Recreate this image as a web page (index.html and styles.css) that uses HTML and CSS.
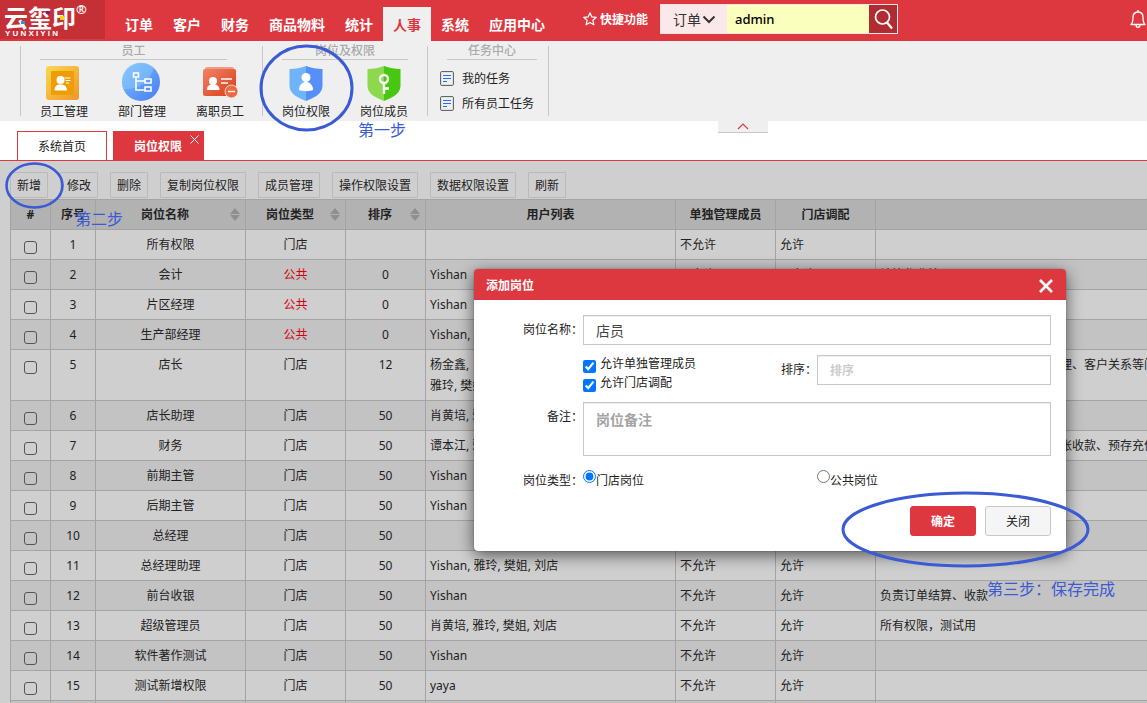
FILE: index.html
```html
<!DOCTYPE html>
<html lang="zh-CN">
<head>
<meta charset="utf-8">
<title>岗位权限</title>
<link rel="stylesheet" href="styles.css">
</head>
<body>
<header class="topbar">
  <a class="logo" href="#" aria-label="云玺印">
    <svg width="105" height="39" viewBox="0 0 105 39">
      <text class="logo-name" x="4" y="27">云玺印</text>
      <text class="logo-latin" x="5" y="36">Y U N X I Y I N</text>
      <rect x="21" y="21" width="4" height="3" fill="#1b9be0"/>
      <rect x="46" y="11" width="4" height="3" fill="#7a1f8c"/>
      <rect x="60" y="16" width="4" height="4" fill="#ffd400"/>
      <text class="logo-mark" x="76" y="14">®</text>
    </svg>
  </a>
  <nav class="nav">
    <a href="#">订单</a><a href="#">客户</a><a href="#">财务</a><a href="#">商品物料</a><a href="#">统计</a><a href="#" class="active">人事</a><a href="#">系统</a><a href="#">应用中心</a>
  </nav>
  <a class="quick" href="#">
    <svg width="14" height="14" viewBox="0 0 14 14" fill="none" stroke="#fff" stroke-width="1.2" stroke-linejoin="round"><path d="M7 .8l1.8 4.1 4.5.4-3.4 3 1 4.5L7 10.5l-3.9 2.3 1-4.500-3.400-3 4.500-.4z"/></svg>
    快捷功能
  </a>
  <form class="search">
    <div class="search-kind">
      <select aria-label="搜索类型"><option>订单</option></select>
      <svg width="14" height="9" viewBox="0 0 14 9" fill="none" stroke="#333" stroke-width="2"><path d="M1.500 1.500L7 7l5.500-5.500"/></svg>
    </div>
    <input type="text" value="admin" aria-label="搜索">
    <button type="button" aria-label="搜索">
      <svg width="22" height="24" viewBox="0 0 22 24" fill="none" stroke="#fff" stroke-width="1.700"><circle cx="9.500" cy="10" r="7"/><path d="M14 15.500l5 6" stroke-width="2.200"/></svg>
    </button>
  </form>
  <button class="bell" type="button" aria-label="通知">
    <svg width="18" height="20" viewBox="0 0 18 20" fill="none" stroke="#fff" stroke-width="1.300" stroke-linejoin="round"><path d="M9 1v2M2 15.500c1.500-1.500 2-3 2-7C4 5 6 3 9 3s5 2 5 5.500c0 4 .5 5.500 2 7zM7 16c0 3 4 3 4 0"/></svg>
  </button>
</header>

<section class="ribbon">
  <div class="group staff">
    <h2>员工</h2>
    <div class="tools">
      <a href="#"><svg width="36" height="40" viewBox="0 0 36 40"><defs><linearGradient id="gold" x1="0" y1="0" x2="1" y2="1"><stop offset="0" stop-color="#f8d850"/><stop offset="1" stop-color="#f0962c"/></linearGradient></defs><rect x="0" y="4" width="33" height="34" rx="3" fill="url(#gold)"/><rect x="5" y="9" width="23" height="24" rx="1" fill="#ee9d05"/><circle cx="14.500" cy="18" r="4" fill="#fff"/><path d="M8.500 28.500c0-4 2-5.500 4.500-6h3c2.500.5 5 2 5 6z" fill="#fff"/><path d="M18.500 16h6M19.500 18.500h5M20 21h3" stroke="#fff" stroke-width="1"/></svg>员工管理</a>
      <a href="#"><svg width="40" height="40" viewBox="0 0 40 40"><defs><linearGradient id="sky" x1="0" y1="0" x2="1" y2="1"><stop offset="0" stop-color="#7ec4fb"/><stop offset="1" stop-color="#477bf5"/></linearGradient></defs><circle cx="19" cy="20" r="19" fill="url(#sky)"/><path d="M.5 25A19 19 0 0 1 32 6C27 20 17 28 1.500 27z" fill="#8cc9fb" opacity=".5"/><path d="M11.500 11h5v4h-5zM23 17h6v4h-6zM23 25h6v4h-6zM14 15v13h9M14 19h9" fill="none" stroke="#fff" stroke-width="1.600"/></svg>部门管理</a>
      <a href="#"><svg width="40" height="40" viewBox="0 0 40 40"><defs><linearGradient id="red" x1="0" y1="0" x2="1" y2="1"><stop offset="0" stop-color="#f18365"/><stop offset="1" stop-color="#da3c16"/></linearGradient></defs><rect x="5" y="5" width="29" height="7" rx="2" fill="#f09c82"/><rect x="3" y="7" width="33" height="27" rx="2" fill="url(#red)"/><circle cx="13" cy="19" r="4" fill="#fff"/><path d="M7 28c0-4 2-5 4.500-6h3c2.500 1 5 2 5 6z" fill="#fff"/><path d="M21 17h11M21 21h7" stroke="#fff" stroke-width="1.400"/><circle cx="31.500" cy="29.500" r="6.500" fill="#ea6a45" stroke="#efefef" stroke-width=".8"/><path d="M28 29.500h7" stroke="#fff" stroke-width="1.400"/></svg>离职员工</a>
    </div>
  </div>
  <div class="group">
    <h2>岗位及权限</h2>
    <div class="tools">
      <a href="#"><svg width="34" height="40" viewBox="0 0 34 40"><path d="M17 4C12 6 6 7 .5 7v17c0 8 9 12 16.500 15z" fill="#6fb3fb"/><path d="M17 4c5 2 11 3 16.500 3v17c0 8-9 12-16.500 15z" fill="#568ffa"/><circle cx="17" cy="15.500" r="4.500" fill="#fff"/><path d="M10 28c0-5 3-7.500 7-8.500 4 1 7 3.500 7 8.500-3 1.500-11 1.500-14 0z" fill="#fff"/></svg>岗位权限</a>
      <a href="#"><svg width="34" height="40" viewBox="0 0 34 40"><path d="M17 4C12 6 6 7 .5 7v17c0 8 9 12 16.500 15z" fill="#8cd94d"/><path d="M17 4c5 2 11 3 16.500 3v17c0 8-9 12-16.500 15z" fill="#48c711"/><circle cx="17" cy="17" r="4" fill="none" stroke="#fff" stroke-width="2.400"/><path d="M17 21v11M17 26.500h5" stroke="#fff" stroke-width="2.400"/></svg>岗位成员</a>
    </div>
  </div>
  <div class="group jobs">
    <h2>任务中心</h2>
    <div class="tasks">
      <a href="#"><svg width="14" height="15" viewBox="0 0 14 15" fill="none"><rect x=".6" y=".6" width="12.800" height="13.800" rx="1" stroke="#555"/><path d="M3 4.500h8M3 7.500h8M3 10.500h4" stroke="#1e6fff"/></svg>我的任务</a>
      <a href="#"><svg width="14" height="15" viewBox="0 0 14 15" fill="none"><rect x=".6" y=".6" width="12.800" height="13.800" rx="1" stroke="#555"/><path d="M3 4.500h8M3 7.500h8M3 10.500h4" stroke="#1e6fff"/></svg>所有员工任务</a>
    </div>
  </div>
  <button class="collapse" type="button" aria-label="收起"><svg width="12" height="7" viewBox="0 0 12 7" fill="none" stroke="#dd383f" stroke-width="1.100"><path d="M1 6l5-5 5 5"/></svg></button>
</section>

<div class="tabs">
  <a href="#" class="tab">系统首页</a>
  <a href="#" class="tab current">岗位权限
    <svg class="tab-close" width="9" height="9" viewBox="0 0 9 9" stroke="#fff"><path d="M.5.5l8 8M8.500.5l-8 8"/></svg>
  </a>
</div>

<main class="content">
  <div class="toolbar">
    <button type="button">新增</button><button type="button">修改</button><button type="button">删除</button><button type="button">复制岗位权限</button><button type="button">成员管理</button><button type="button">操作权限设置</button><button type="button">数据权限设置</button><button type="button">刷新</button>
  </div>
  <div class="table-view">
  <table>
    <colgroup><col class="w-check"><col class="w-no"><col class="w-name"><col class="w-kind"><col class="w-sort"><col class="w-users"><col class="w-flag"><col class="w-flag"><col></colgroup>
    <thead>
      <tr><th>#</th><th>序号</th><th class="sortable">岗位名称<i class="sorter"></i></th><th class="sortable">岗位类型<i class="sorter"></i></th><th class="sortable">排序<i class="sorter"></i></th><th>用户列表</th><th>单独管理成员</th><th>门店调配</th><th></th></tr>
    </thead>
    <tbody>
      <tr><td><input type="checkbox" aria-label="选择 1"></td><td>1</td><td>所有权限</td><td>门店</td><td></td><td></td><td>不允许</td><td>允许</td><td></td></tr>
      <tr><td><input type="checkbox" aria-label="选择 2"></td><td>2</td><td>会计</td><td class="public">公共</td><td>0</td><td>Yishan</td><td>不允许</td><td>不允许</td><td>计算作业情况</td></tr>
      <tr><td><input type="checkbox" aria-label="选择 3"></td><td>3</td><td>片区经理</td><td class="public">公共</td><td>0</td><td>Yishan</td><td>不允许</td><td>允许</td><td></td></tr>
      <tr><td><input type="checkbox" aria-label="选择 4"></td><td>4</td><td>生产部经理</td><td class="public">公共</td><td>0</td><td>Yishan, 雅玲</td><td>不允许</td><td>允许</td><td></td></tr>
      <tr><td><input type="checkbox" aria-label="选择 5"></td><td>5</td><td>店长</td><td>门店</td><td>12</td><td>杨金鑫, 肖黄培, 刘店<br>雅玲, 樊姐</td><td>不允许</td><td>允许</td><td>门店全面管理、订单管理、员工管理、客户关系等门店事务</td></tr>
      <tr><td><input type="checkbox" aria-label="选择 6"></td><td>6</td><td>店长助理</td><td>门店</td><td>50</td><td>肖黄培, 雅玲</td><td>不允许</td><td>允许</td><td></td></tr>
      <tr><td><input type="checkbox" aria-label="选择 7"></td><td>7</td><td>财务</td><td>门店</td><td>50</td><td>谭本江, 雅玲</td><td>不允许</td><td>允许</td><td>门店财务管理、订单结算、负责挂账收款、预存充值</td></tr>
      <tr><td><input type="checkbox" aria-label="选择 8"></td><td>8</td><td>前期主管</td><td>门店</td><td>50</td><td>Yishan</td><td>不允许</td><td>允许</td><td></td></tr>
      <tr><td><input type="checkbox" aria-label="选择 9"></td><td>9</td><td>后期主管</td><td>门店</td><td>50</td><td>Yishan</td><td>不允许</td><td>允许</td><td></td></tr>
      <tr><td><input type="checkbox" aria-label="选择 10"></td><td>10</td><td>总经理</td><td>门店</td><td>50</td><td></td><td>不允许</td><td>允许</td><td></td></tr>
      <tr><td><input type="checkbox" aria-label="选择 11"></td><td>11</td><td>总经理助理</td><td>门店</td><td>50</td><td>Yishan, 雅玲, 樊姐, 刘店</td><td>不允许</td><td>允许</td><td></td></tr>
      <tr><td><input type="checkbox" aria-label="选择 12"></td><td>12</td><td>前台收银</td><td>门店</td><td>50</td><td>Yishan</td><td>不允许</td><td>允许</td><td>负责订单结算、收款</td></tr>
      <tr><td><input type="checkbox" aria-label="选择 13"></td><td>13</td><td>超级管理员</td><td>门店</td><td>50</td><td>肖黄培, 雅玲, 樊姐, 刘店</td><td>不允许</td><td>允许</td><td>所有权限，测试用</td></tr>
      <tr><td><input type="checkbox" aria-label="选择 14"></td><td>14</td><td>软件著作测试</td><td>门店</td><td>50</td><td>Yishan</td><td>不允许</td><td>允许</td><td></td></tr>
      <tr><td><input type="checkbox" aria-label="选择 15"></td><td>15</td><td>测试新增权限</td><td>门店</td><td>50</td><td>yaya</td><td>不允许</td><td>允许</td><td></td></tr>
      <tr><td></td><td></td><td></td><td></td><td></td><td></td><td></td><td></td><td></td></tr>
    </tbody>
  </table>
  </div>
</main>

<div class="dialog" role="dialog" aria-labelledby="dialog-title">
  <div class="dialog-head">
    <h1 id="dialog-title">添加岗位</h1>
    <button type="button" aria-label="关闭窗口"><svg width="14" height="14" viewBox="0 0 14 14" stroke="#fff" stroke-width="2.600"><path d="M1 1l12 12M13 1L1 13"/></svg></button>
  </div>
  <form class="dialog-body">
    <div class="row">
      <label class="caption" for="post-name">岗位名称：</label>
      <input class="field" id="post-name" type="text" value="店员">
    </div>
    <div class="row">
      <span class="caption"></span>
      <div class="checks">
        <label><input type="checkbox" checked>允许单独管理成员</label>
        <label><input type="checkbox" checked>允许门店调配</label>
      </div>
      <div class="sort">
        <label class="caption" for="post-sort">排序：</label>
        <input class="field small" id="post-sort" type="text" placeholder="排序">
      </div>
    </div>
    <div class="row">
      <label class="caption" for="post-note">备注：</label>
      <textarea class="field" id="post-note" placeholder="岗位备注"></textarea>
    </div>
    <div class="row">
      <span class="caption">岗位类型：</span>
      <div class="radio"><label><input type="radio" name="kind" checked>门店岗位</label></div>
      <div class="radio"><label><input type="radio" name="kind">公共岗位</label></div>
    </div>
    <div class="actions">
      <button type="button" class="primary">确定</button>
      <button type="button">关闭</button>
    </div>
  </form>
</div>

<svg class="notes" width="1147" height="703" viewBox="0 0 1147 703">
  <g fill="none" stroke="#3a5bd4" stroke-width="3">
    <ellipse cx="306.500" cy="88" rx="45.500" ry="42"/>
    <ellipse cx="34.500" cy="185.500" rx="28" ry="22" stroke-width="2.600"/>
    <ellipse cx="965.500" cy="529.500" rx="122.500" ry="36.500"/>
  </g>
  <text x="358" y="136">第一步</text>
  <text x="75" y="225">第二步</text>
  <text x="987" y="595">第三步：保存完成</text>
</svg>
</body>
</html>
```

FILE: styles.css
```css
* { box-sizing: border-box; }
html { height: 100%; }
body {
  margin: 0;
  height: 100%;
  position: relative;
  overflow: hidden;
  display: flex;
  flex-direction: column;
  background: #fff;
  color: #222;
  font: 12px/21px "Noto Sans", "Noto Sans CJK SC", sans-serif;
}
a { color: inherit; text-decoration: none; }
button, input, select, textarea { font: inherit; color: inherit; margin: 0; }
button { cursor: pointer; padding: 0; }
svg { display: block; flex: none; }
h1, h2 { margin: 0; font-size: 12px; }

.topbar { flex: none; height: 41px; display: flex; align-items: flex-start; background: #dd383f; color: #fff; }
.logo { width: 105px; height: 39px; margin-right: 10px; background: #c52f36; }
.logo text { fill: #fff; font-family: "Noto Sans CJK SC", sans-serif; font-weight: 700; }
.logo .logo-name { font-size: 24px; }
.logo .logo-latin { font-family: "Liberation Sans", sans-serif; font-size: 8px; }
.logo .logo-mark { font-family: "Noto Sans", sans-serif; font-size: 13px; }
.nav { display: flex; padding-top: 7px; font-size: 14px; font-weight: 700; }
.nav a { height: 34px; line-height: 36px; padding: 0 10px; }
.nav .active { background: #efefef; color: #dd383f; }
.quick { display: flex; align-items: center; gap: 3px; height: 38px; margin-left: 28px; font-weight: 700; }
.search { display: flex; height: 30px; margin: 4px 0 0 12px; border: 1px solid #f3e3e3; }
.search-kind { width: 66px; display: flex; align-items: center; padding-left: 12px; background: #fbe9e9; color: #333; }
.search-kind select { width: 29px; height: 28px; padding: 0; border: 0; background: none; appearance: none; font-size: 14px; }
.search input { width: 142px; padding: 0 8px; border: 0; background: #faffbd; color: #000; font-size: 13px; font-weight: 500; }
.search button { width: 28px; border: 0; padding-left: 4px; background: #b02c33; }
.bell { margin: 9px 0 0 auto; border: 0; background: none; }

.ribbon { flex: none; position: relative; height: 80px; display: flex; padding: 5px 0 5px 20px; background: #efefef; }
.group { padding: 0 19px; border-left: 1px solid #c8c8c8; }
.group h2 { height: 14px; line-height: 10px; border-bottom: 1px solid #c8c8c8; text-align: center; color: #aaa; font-weight: 500; }
.staff { padding-right: 18px; }
.staff h2 { margin-right: 17px; }
.jobs { padding-right: 11px; border-right: 1px solid #c8c8c8; }
.jobs h2 { width: 90px; }
.tools { display: flex; gap: 30px; }
.tools a { width: 48px; display: flex; flex-direction: column; align-items: center; line-height: 20px; white-space: nowrap; }
.tools a svg { margin-top: 2px; }
.tasks { display: flex; flex-direction: column; gap: 4px; padding-top: 8px; }
.tasks a { display: flex; align-items: center; gap: 8px; margin-left: -7px; white-space: nowrap; }
.collapse { position: absolute; top: 80px; right: 379px; width: 50px; height: 12px; display: flex; justify-content: center; align-items: center; border: 0; border-bottom: 1px solid #c8c8c8; background: #efefef; }

.tabs { flex: none; height: 40px; display: flex; align-items: flex-end; gap: 6px; padding-left: 17px; border-bottom: 1px solid #dd383f; }
.tab { position: relative; height: 29px; line-height: 29px; padding: 0 20px; border: 1px solid #dd383f; border-bottom: 0; }
.tab.current { background: #dd383f; color: #fff; font-weight: 700; padding-right: 21px; }
.tab-close { position: absolute; top: 3px; right: 4px; }

.content { flex: 1; min-height: 0; overflow: hidden; padding: 11px 0 0 10px; background: #cfcfcf; }
.toolbar { display: flex; gap: 12px; margin-bottom: 1px; }
.toolbar button { height: 26px; padding: 0 6px; border: 1px solid #bababa; border-radius: 1px; background: none; }
.table-view { overflow: hidden; }
table { width: 1465px; table-layout: fixed; border-collapse: collapse; }
.w-check { width: 40px; }
.w-no { width: 45px; }
.w-name { width: 150px; }
.w-kind { width: 100px; }
.w-sort { width: 80px; }
.w-users { width: 250px; }
.w-flag { width: 100px; }
th, td { height: 30px; padding: 4px; border: 1px solid #a4a4a4; vertical-align: top; line-height: 21px; }
th { background: #b2b2b2; }
.sortable { position: relative; padding-right: 15px; }
.sorter { position: absolute; right: 5px; top: 8px; width: 10px; height: 13px; display: flex; flex-direction: column; justify-content: space-between; }
.sorter::before, .sorter::after { content: ""; border: 5px solid transparent; }
.sorter::before { border-top: 0; border-bottom: 6px solid #8f8f8f; }
.sorter::after { border-bottom: 0; border-top: 6px solid #8f8f8f; }
tbody tr:nth-child(even) { background: #c3c3c3; }
td:nth-child(-n+5) { text-align: center; }
td input { appearance: none; width: 13px; height: 13px; margin-top: 7px; border: 1px solid #555; border-radius: 3px; display: inline-block; vertical-align: top; }
.public { color: #d6000c; }

.dialog { position: absolute; left: 474px; top: 269px; width: 592px; border-radius: 4px; background: #fff; box-shadow: 0 4px 16px rgba(0, 0, 0, .6), 0 0 1px #333; overflow: hidden; }
.dialog-head { height: 31px; display: flex; align-items: center; justify-content: space-between; padding: 2px 13px 0 12px; background: #dd383f; color: #fff; }
.dialog-head button { border: 0; background: none; }
.dialog-body { padding: 15px; }
.row { display: flex; align-items: flex-start; margin-bottom: 10px; }
.caption { flex: none; width: 94px; line-height: 30px; text-align: right; white-space: nowrap; }
.field { flex: 1; min-width: 0; height: 30px; padding: 0 12px; border: 1px solid #c8c8c8; border-radius: 0; background: #fff; box-shadow: inset 0 1px 1px #eee; color: #444; font-size: 14px; }
.field::placeholder { color: #a4a4a4; font-weight: 700; }
.small { font-size: 12px; }
.small::placeholder { color: #ccc; }
textarea.field { display: block; height: 54px; padding: 6px 12px; resize: none; }
.checks { flex: 1; display: flex; flex-direction: column; gap: 1px; }
.checks label { display: flex; align-items: flex-start; gap: 4px; height: 18px; line-height: 18px; white-space: nowrap; }
.checks input { width: 13px; height: 13px; margin-top: 5px; }
.sort { display: flex; flex: 0 0 328px; }
.radio { flex: 1; padding-top: 4px; }
.radio label { display: flex; align-items: flex-start; }
.radio input { width: 13px; height: 13px; }
.actions { display: flex; justify-content: flex-end; gap: 9px; }
.actions button { width: 66px; height: 30px; border: 1px solid #c8c8c8; border-radius: 3px; background: #f5f5f5; }
.actions .primary { border-color: #dd383f; background: #dd383f; color: #fff; font-weight: 700; }

.notes { position: absolute; left: 0; top: 0; pointer-events: none; }
.notes text { fill: #3a5bd4; font-size: 16px; }
```
